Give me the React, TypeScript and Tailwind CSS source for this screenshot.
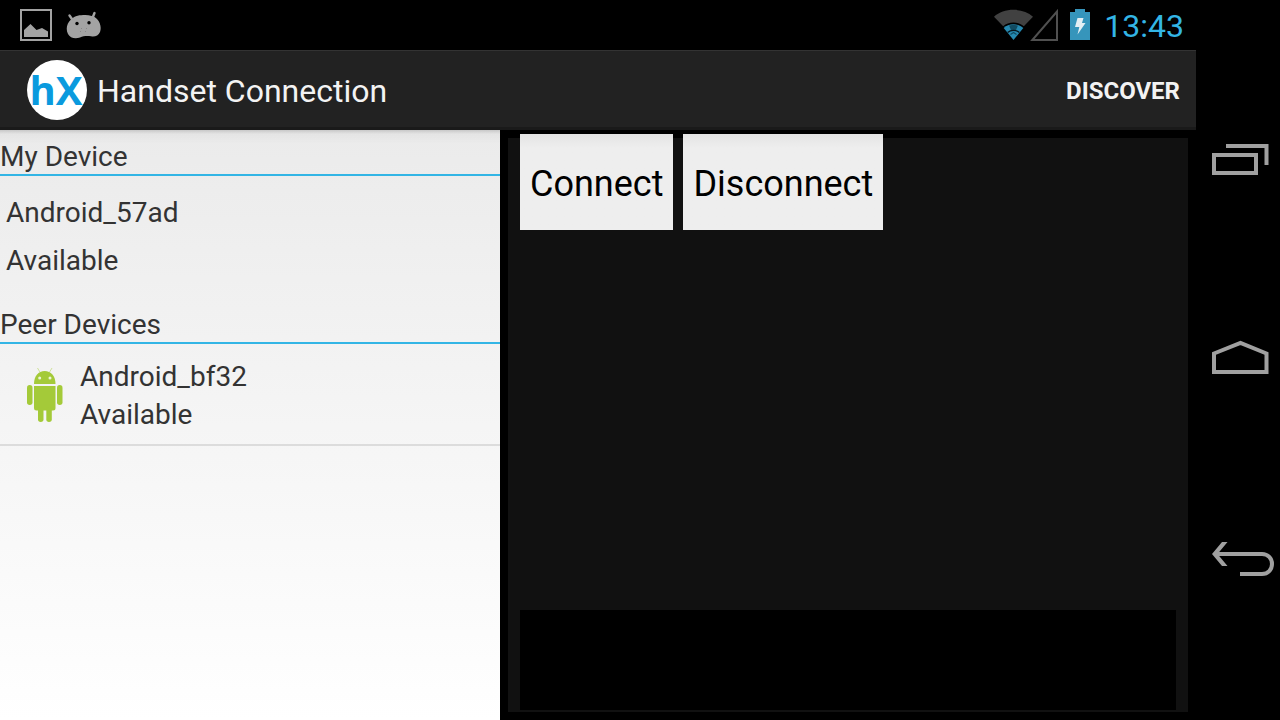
import React from "react";

function PictureIcon() {
  return (
    <svg width="32" height="32" viewBox="0 0 32 32" aria-hidden="true">
      <rect x="1" y="1" width="30" height="30" fill="none" stroke="#a3a3a3" strokeWidth="2" />
      <path d="M4 28V21L10.500 15L16.500 21L22 19L28 22.500V28Z" fill="#a3a3a3" />
    </svg>
  );
}

function DroidHeadIcon() {
  return (
    <svg width="36" height="28" viewBox="0 0 36 28" aria-hidden="true">
      <path d="M3.500 4.500L7 9.500M28.500 2L26.500 7" stroke="#a3a3a3" strokeWidth="2.400" strokeLinecap="round" />
      <path
        d="M5 8.500C9 4.500 14 4 19 4C24 4 28 5 31 8C34.500 11.500 35.500 17 34 21C32.500 25 28.500 26 25 25.300C20 24.800 17.500 25.200 14 26.500C9 28 4 27 2 23C-.5 18 .8 12.500 5 8.500Z"
        fill="#a3a3a3"
      />
      <circle cx="11" cy="12.500" r="1.700" fill="#000" />
      <circle cx="23" cy="11.700" r="1.700" fill="#000" />
      <path d="M15 17.500h.8M20 17.500h.8M14 20.500h.8M19 20.500h.8" stroke="#777" strokeWidth=".8" />
    </svg>
  );
}

function WifiIcon() {
  return (
    <svg width="40" height="32" viewBox="0 0 40 32" aria-hidden="true">
      <path d="M0 7.800C5 3 12 .8 19.500 .8S34 3 39 7.800L29.800 17.200C27 14.700 23.500 13.500 19.500 13.500S12 14.700 9.200 17.200Z" fill="#414141" />
      <path d="M9.700 19C12.300 16.600 15.500 15.300 19.500 15.300S26.700 16.600 29.300 19L19.500 31Z" fill="#2689b0" />
      <path d="M15 16.500L19.500 15.700L24 16.500L22 21L19.500 22L17 21Z" fill="#124c62" />
      <path d="M13.600 23.500C15.300 22 17.200 21.300 19.500 21.300S23.700 22 25.400 23.500" fill="none" stroke="#06141a" strokeWidth="1.300" />
      <path d="M16.500 25.500L19.500 23.500L22.500 25.500" fill="none" stroke="#124c62" strokeWidth="1.200" />
    </svg>
  );
}

function SignalIcon() {
  return (
    <svg width="28" height="32" viewBox="0 0 28 32" aria-hidden="true">
      <path d="M27 2.500V31H2.300Z" fill="none" stroke="#505050" strokeWidth="2" />
    </svg>
  );
}

function BatteryIcon() {
  return (
    <svg width="20" height="32" viewBox="0 0 20 32" aria-hidden="true">
      <path d="M5 0H15V3H20V31H0V3H5Z" fill="#3695bb" />
      <path d="M7.500 9H13.500L12 14H15.500L7.500 25.500L9.300 18H5Z" fill="#e4eff4" />
    </svg>
  );
}

function StatusBar() {
  return (
    <div className="flex h-[50px] items-center justify-between bg-black pr-3 pl-5">
      <div className="flex items-center gap-[14px]">
        <PictureIcon />
        <DroidHeadIcon />
      </div>
      <div className="flex items-center">
        <WifiIcon />
        <span className="-ml-1">
          <SignalIcon />
        </span>
        <span className="ml-3">
          <BatteryIcon />
        </span>
        <time className="ml-[14px] pt-[2px] text-[32px] leading-8 text-[#33b5e5]">13:43</time>
      </div>
    </div>
  );
}

function Logo() {
  return (
    <span className="flex size-[60px] items-center justify-center rounded-full bg-white pr-[2px] font-['Open_Sans',sans-serif] text-[40px] leading-none font-bold text-[#0a9ade]">
      hX
    </span>
  );
}

function ActionBar() {
  return (
    <header className="flex h-20 items-center justify-between border-t border-b-[3px] border-t-[#333] border-b-[#1a1a1a] bg-[#222] pt-[2px] pr-4 pl-[27px]">
      <div className="flex items-center gap-[10px]">
        <Logo />
        <h1 className="pt-[2px] text-[32px] leading-10 text-[#f3f3f3]">Handset Connection</h1>
      </div>
      <button type="button" className="pt-[2px] text-2xl font-bold text-[#f3f3f3]">
        DISCOVER
      </button>
    </header>
  );
}

function SectionTitle({ children }: { children: React.ReactNode }) {
  return <h2 className="h-10 border-b-2 border-[#33b5e5] pt-1 leading-[34px]">{children}</h2>;
}

function RobotIcon() {
  return (
    <svg width="36" height="58" viewBox="0 0 36 58" aria-hidden="true" className="shrink-0">
      <path d="M10.500 1L13.500 6M25 1L22 6" stroke="#cfe29a" strokeWidth="1" />
      <g fill="#a4ca39">
        <path d="M7 17C7 9 11.500 4 17.700 4S28.500 9 28.500 17Z" />
        <path d="M7 19H28.500V41Q28.500 43.500 26 43.500H9.500Q7 43.500 7 41Z" />
        <rect x="0" y="18" width="5.500" height="20" rx="2.700" />
        <rect x="30" y="18" width="5.500" height="20" rx="2.700" />
        <rect x="11" y="40" width="5.500" height="15" rx="2.700" />
        <rect x="19.300" y="40" width="5.500" height="15" rx="2.700" />
      </g>
      <circle cx="12.700" cy="11" r="1.500" fill="#eef5d9" />
      <circle cx="23" cy="11" r="1.500" fill="#eef5d9" />
    </svg>
  );
}

function DeviceList() {
  return (
    <aside className="w-[500px] shrink-0 bg-linear-to-b from-[#ebebeb] to-white text-[28px] text-[#333]">
      <div className="bg-linear-to-b from-black/15 via-black/3 via-[4px] to-transparent to-[14px] pt-[6px]">
        <section>
          <SectionTitle>My Device</SectionTitle>
          <div className="px-[6px] pt-[13px] pb-[19px] leading-[48px]">
            <p>Android_57ad</p>
            <p>Available</p>
          </div>
        </section>
        <section>
          <SectionTitle>Peer Devices</SectionTitle>
          <ul>
            <li className="flex items-center gap-[17px] border-b-2 border-[#dcdcdc] pt-[14px] pb-[10px] pl-[27px]">
              <RobotIcon />
              <div className="leading-[38px]">
                <p>Android_bf32</p>
                <p>Available</p>
              </div>
            </li>
          </ul>
        </section>
      </div>
    </aside>
  );
}

function DetailButton({ children }: { children: React.ReactNode }) {
  return (
    <button
      type="button"
      className="h-24 bg-linear-to-b from-[#e4e4e4] to-[#eee] to-[14px] px-[10px] pt-1 text-4xl text-black"
    >
      {children}
    </button>
  );
}

function DetailPane() {
  return (
    <main className="flex flex-1 bg-black p-2">
      <div className="flex flex-1 flex-col justify-between bg-[#111] px-3 pb-[2px]">
        <div className="-mt-1 flex gap-[10px]">
          <DetailButton>Connect</DetailButton>
          <DetailButton>Disconnect</DetailButton>
        </div>
        <div className="h-[100px] bg-black" />
      </div>
    </main>
  );
}

const navButton = "flex h-[66px] w-full items-center justify-start pl-4";

function NavigationBar() {
  return (
    <nav className="flex w-[84px] shrink-0 flex-col justify-between bg-black pt-[126px] pb-32">
      <button type="button" aria-label="Recent apps" className={navButton}>
        <svg width="57" height="32" viewBox="0 0 57 32" fill="none" stroke="#a0a0a0" strokeWidth="4" aria-hidden="true">
          <path d="M14 3H54.500V22" />
          <rect x="2" y="12" width="42" height="18" />
        </svg>
      </button>
      <button type="button" aria-label="Home" className={navButton}>
        <svg width="57" height="38" viewBox="0 0 57 38" fill="none" stroke="#a0a0a0" strokeWidth="4" aria-hidden="true">
          <path d="M2 32V13.500L28.500 3L54.500 13.500V32Z" />
        </svg>
      </button>
      <button type="button" aria-label="Back" className={navButton}>
        <svg width="62" height="36" viewBox="0 0 62 36" fill="none" stroke="#a0a0a0" strokeWidth="4" aria-hidden="true">
          <path d="M3 13H50C56 13 60 17.500 60 23S56 33 50 33H28" />
          <path d="M10 1H15.500L5.500 13L15.500 25H10L0 13Z" fill="#a0a0a0" stroke="none" />
        </svg>
      </button>
    </nav>
  );
}

export default function App() {
  return (
    <div className="flex min-h-screen bg-black font-[Roboto,sans-serif]">
      <div className="flex min-w-0 flex-1 flex-col">
        <StatusBar />
        <ActionBar />
        <div className="flex flex-1">
          <DeviceList />
          <DetailPane />
        </div>
      </div>
      <NavigationBar />
    </div>
  );
}
